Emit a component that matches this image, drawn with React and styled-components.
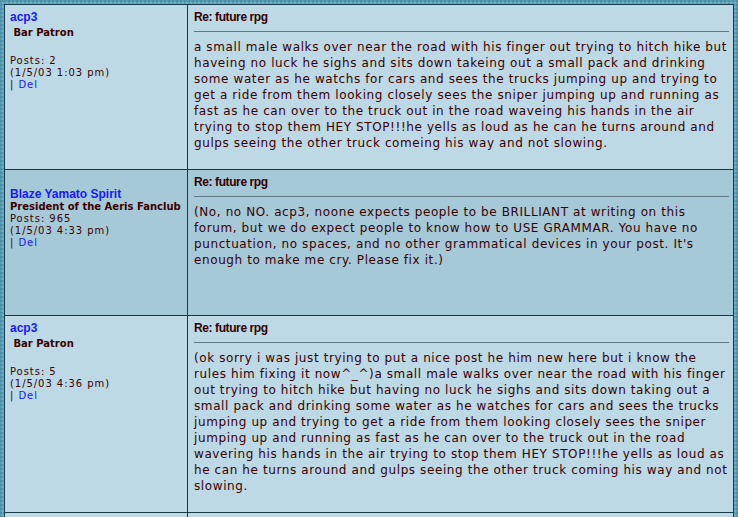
import React from 'react';
import styled, { createGlobalStyle } from 'styled-components';

const GlobalStyle = createGlobalStyle`
    *, *::before, *::after {
        box-sizing: border-box;
    }
    html, body {
        margin: 0;
        padding: 0;
        height: 100%;
        overflow: hidden;
    }
    body {
        background-color: #5a9cb4;
        background-image:
            radial-gradient(circle at 1px 1px, #4b90a9 1px, transparent 1.2px),
            radial-gradient(circle at 3px 3px, #6eaec4 1px, transparent 1.2px);
        background-size: 4px 4px;
    }
`;

const Page = styled.div`
    padding: 4px 4px 0 4px;
`;

const Thread = styled.div`
    display: grid;
    grid-template-columns: 182px 1fr;
    gap: 1px;
    width: 730px;
    background: #173a48;
    border: 1px solid #173a48;
`;

const AuthorCell = styled.div`
    background: ${p => (p.$alt ? '#a6c9d8' : '#bcd9e5')};
    padding: ${p => p.$top || 5}px 5px 5px 5px;
    min-height: ${p => p.$minHeight || 0}px;
    font-family: "DejaVu Sans", Verdana, sans-serif;
    color: #3a0000;
`;

const Name = styled.a`
    display: block;
    font-family: "Liberation Sans", Arial, sans-serif;
    font-weight: bold;
    font-size: 12px;
    line-height: 14px;
    color: #1818f8;
    text-decoration: none;
`;

const Rank = styled.div`
    font-family: "DejaVu Sans", Verdana, sans-serif;
    font-weight: bold;
    font-size: 10px;
    line-height: 12px;
    white-space: nowrap;
    color: #3a0000;
    margin: ${p => (p.$spaced ? '3px 0 16px 0' : '0')};
`;

const Meta = styled.div`
    font-size: 10px;
    line-height: 12px;
    letter-spacing: 0.95px;
    color: #3a0000;
`;

const DelLink = styled.a`
    color: #1818f8;
    text-decoration: none;
`;

const MessageCell = styled.div`
    background: ${p => (p.$alt ? '#a6c9d8' : '#bcd9e5')};
    padding: 5px 4px 18px 6px;
    min-height: ${p => p.$minHeight || 0}px;
`;

const Subject = styled.div`
    font-family: "Liberation Sans", Arial, sans-serif;
    font-weight: bold;
    font-size: 12px;
    line-height: 14px;
    letter-spacing: -0.4px;
    color: #330000;
    padding-bottom: 7px;
    border-bottom: 1px solid #5f7a85;
    margin-bottom: 7px;
`;

const Body = styled.div`
    font-family: "DejaVu Sans", Verdana, sans-serif;
    font-size: 12px;
    line-height: 16px;
    letter-spacing: 0.6px;
    color: #3a0000;
`;

const posts = [
    {
        name: 'acp3',
        rank: '\u00a0Bar Patron',
        spaced: true,
        posts: 2,
        date: '(1/5/03 1:03 pm)',
        body: 'a small male walks over near the road with his finger out trying to hitch hike but haveing no luck he sighs and sits down takeing out a small pack and drinking some water as he watchs for cars and sees the trucks jumping up and trying to get a ride from them looking closely sees the sniper jumping up and running as fast as he can over to the truck out in the road waveing his hands in the air trying to stop them HEY STOP!!!he yells as loud as he can he turns around and gulps seeing the other truck comeing his way and not slowing.',
    },
    {
        name: 'Blaze Yamato Spirit',
        rank: 'President of the Aeris Fanclub',
        alt: true,
        top: 17,
        minHeight: 145,
        posts: 965,
        date: '(1/5/03 4:33 pm)',
        body: "(No, no NO. acp3, noone expects people to be BRILLIANT at writing on this forum, but we do expect people to know how to USE GRAMMAR. You have no punctuation, no spaces, and no other grammatical devices in your post. It's enough to make me cry. Please fix it.)",
    },
    {
        name: 'acp3',
        rank: '\u00a0Bar Patron',
        spaced: true,
        posts: 5,
        date: '(1/5/03 4:36 pm)',
        body: '(ok sorry i was just trying to put a nice post he him new here but i know the rules him fixing it now^_^)a small male walks over near the road with his finger out trying to hitch hike but having no luck he sighs and sits down taking out a small pack and drinking some water as he watches for cars and sees the trucks jumping up and trying to get a ride from them looking closely sees the sniper jumping up and running as fast as he can over to the truck out in the road wavering his hands in the air trying to stop them HEY STOP!!!he yells as loud as he can he turns around and gulps seeing the other truck coming his way and not slowing.',
    },
];

const App = () => {
    return (
        <Page>
            <GlobalStyle />
            <Thread>
                {posts.map((post, i) => (
                    <React.Fragment key={i}>
                        <AuthorCell $alt={post.alt} $top={post.top} $minHeight={post.minHeight}>
                            <Name href="#">{post.name}</Name>
                            <Rank $spaced={post.spaced}>{post.rank}</Rank>
                            <Meta>Posts: {post.posts}</Meta>
                            <Meta>{post.date}</Meta>
                            <Meta>| <DelLink href="#">Del</DelLink></Meta>
                        </AuthorCell>
                        <MessageCell $alt={post.alt}>
                            <Subject>Re: future rpg</Subject>
                            <Body>{post.body}</Body>
                        </MessageCell>
                    </React.Fragment>
                ))}
                <AuthorCell $minHeight={60} />
                <MessageCell $minHeight={60} />
            </Thread>
        </Page>
    );
};

export default App;
